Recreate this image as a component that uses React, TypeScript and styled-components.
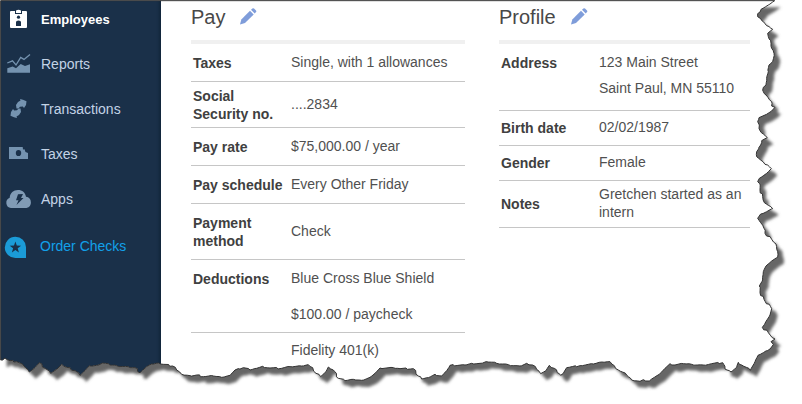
import React from "react";
import styled, { createGlobalStyle } from "styled-components";

const GlobalStyle = createGlobalStyle`
  *, *::before, *::after { box-sizing: border-box; }
  body {
    margin: 0;
    background: #fff;
    font-family: "Liberation Sans", Arial, Helvetica, sans-serif;
    font-size: 14px;
    color: #444;
  }
`;

const Page = styled.div`
  position: relative;
  display: flex;
  min-height: 100vh;
  overflow: hidden;
`;

const Sidebar = styled.nav`
  flex: 0 0 161px;
  display: flex;
  flex-direction: column;
  gap: 9px;
  padding: 1px 0 0 1px;
  background: #1a3049;
  box-shadow: inset -4px 0 3px -2px #12263b;
`;

const NavLink = styled.a<{ $tone?: "active" | "accent" }>`
  display: flex;
  align-items: center;
  gap: ${(p) => (p.$tone === "accent" ? "0" : "1px")};
  height: 36px;
  margin-top: ${(p) => (p.$tone === "accent" ? "2px" : "0")};
  font-size: ${(p) => (p.$tone === "active" ? "13px" : "14px")};
  font-weight: ${(p) => (p.$tone === "active" ? 700 : 400)};
  color: ${(p) =>
    p.$tone === "active" ? "#fff" : p.$tone === "accent" ? "#12a0ea" : "#c3d3e6"};
  text-decoration: none;
`;

const NavIcon = styled.svg`
  flex: none;
  width: 39px;
  height: 28px;
`;

const Content = styled.main`
  flex: 1;
  display: grid;
  grid-template-columns: 274fr 251fr;
  align-items: start;
  column-gap: 34px;
  padding: 0 52px 0 30px;
`;

const Panel = styled.section`
  min-width: 0;
`;

const PanelHeader = styled.header`
  display: flex;
  align-items: flex-start;
  gap: 15px;
  height: 44px;
  padding-top: 5px;
  border-bottom: 4px solid #f0f0f0;
`;

const PanelTitle = styled.h2`
  margin: 0;
  font-size: 20px;
  line-height: 24px;
  font-weight: 400;
  color: #484848;
`;

const EditButton = styled.button`
  display: flex;
  padding: 3px 0 0;
  border: 0;
  background: none;
  cursor: pointer;
`;

const Details = styled.table`
  width: 100%;
  table-layout: fixed;
  border-spacing: 0;
`;

const LabelColumn = styled.col`
  width: 100px;
`;

const Row = styled.tr<{ $height: number }>`
  height: ${(p) => p.$height}px;
`;

const Label = styled.th<{ $lead?: number; $last?: boolean }>`
  padding: ${(p) => (p.$lead === 26 ? "6px" : p.$lead ? "1px" : "0")} 0 0 2px;
  border-bottom: ${(p) => (p.$last ? "0" : "1px solid #c6c6c6")};
  text-align: left;
  vertical-align: ${(p) => (p.$lead ? "top" : "middle")};
  line-height: ${(p) => p.$lead ?? 18}px;
  font-weight: 700;
  color: #404040;
`;

const Value = styled.td<{ $lead?: number; $last?: boolean }>`
  padding: ${(p) => (p.$lead === 26 ? "5px 0 0" : p.$lead ? "0" : "0 0 2px")};
  border-bottom: ${(p) => (p.$last ? "0" : "1px solid #c6c6c6")};
  vertical-align: ${(p) => (p.$lead ? "top" : "middle")};
  line-height: ${(p) => p.$lead ?? 18}px;
  color: #505050;
`;

const Line = styled.div``;

const TornEdge = styled.svg`
  position: absolute;
  inset: 0;
  width: 100%;
  height: 100%;
  pointer-events: none;
`;

const DARK = "#1a3049";
const MUTED = "#7593b0";
const ARROW =
  "M15.500 13.500 15 10l2-3 2.500-1.500L19 4l3 .8 3.500 1.500-.5 3.700-2 3-1.200-1.500-2.800.3-1.500 1.700z";

const navItems: {
  name: string;
  tone?: "active" | "accent";
  icon: React.ReactNode;
}[] = [
  {
    name: "Employees",
    tone: "active",
    icon: (
      <>
        <rect x="9" y="6" width="17" height="17" rx="1" fill="#fff" />
        <path d="M15 6V5.500q2.500-1.500 5 0V6z" fill="#fff" />
        <path d="M14 6h1v2h5V6h1v3h-7z" fill={DARK} />
        <circle cx="17.500" cy="12.200" r="1.600" fill={DARK} />
        <path d="M15 21v-4q0-1.500 2.500-1.500t2.500 1.500v4z" fill={DARK} />
      </>
    ),
  },
  {
    name: "Reports",
    icon: (
      <>
        <path
          d="M6.300 13 11.500 10.800 15 15l4.700-7.600 3.300 2 6-5"
          fill="none"
          stroke={MUTED}
          strokeWidth="1.300"
        />
        <path d="M6.300 18.300 11.700 16.500 15 18.300l4.700-4.300 4.300 2 5-1.700v8.400H6.300z" fill={MUTED} />
      </>
    ),
  },
  {
    name: "Transactions",
    icon: (
      <g fill={MUTED}>
        <path d={ARROW} />
        <path d={ARROW} transform="rotate(180 17.500 13.500)" />
      </g>
    ),
  },
  {
    name: "Taxes",
    icon: (
      <>
        <path d="M8 7h13.700l.3 2.500 1.500-.2 1 2.700 2.500 1v6H8z" fill={MUTED} />
        <ellipse cx="17.500" cy="13" rx="2.700" ry="3.100" fill={DARK} />
      </>
    ),
  },
  {
    name: "Apps",
    icon: (
      <>
        <path
          d="M10 23a5.300 5.300 0 0 1-1.300-10.200C9 8 12.500 5 17 5c4.300 0 7.300 2.500 8 6.800A5.700 5.700 0 0 1 25.500 23z"
          fill="#819bb5"
        />
        <path d="M17 9.300 22 9l-2 4h2.500L15.500 20l2-4.700H15z" fill={DARK} />
      </>
    ),
  },
  {
    name: "Order Checks",
    tone: "accent",
    icon: (
      <>
        <path d="M25 15.300V26H14.500A10.600 10.600 0 1 1 25 15.300z" fill="#1b9bd7" />
        <path
          d="m14.400 9.500 1.400 4.100 4.300.1-3.400 2.600 1.200 4.200-3.500-2.500-3.500 2.500 1.200-4.200-3.400-2.600 4.300-.1z"
          fill={DARK}
        />
      </>
    ),
  },
];

type Detail = {
  label?: string;
  lines: string[];
  height: number;
  lead?: number;
  last?: boolean;
};

const pay: Detail[] = [
  { label: "Taxes", lines: ["Single, with 1 allowances"], height: 38 },
  { label: "Social Security no.", lines: ["....2834"], height: 46 },
  { label: "Pay rate", lines: ["$75,000.00 / year"], height: 38 },
  { label: "Pay schedule", lines: ["Every Other Friday"], height: 38 },
  { label: "Payment method", lines: ["Check"], height: 56 },
  {
    label: "Deductions",
    lines: ["Blue Cross Blue Shield", "$100.00 / paycheck"],
    height: 72,
    lead: 36,
  },
  { lines: ["Fidelity 401(k)"], height: 36, lead: 34, last: true },
];

const profile: Detail[] = [
  {
    label: "Address",
    lines: ["123 Main Street", "Saint Paul, MN 55110"],
    height: 67,
    lead: 26,
  },
  { label: "Birth date", lines: ["02/02/1987"], height: 35 },
  { label: "Gender", lines: ["Female"], height: 35 },
  { label: "Notes", lines: ["Gretchen started as an intern"], height: 47 },
];

/* Outline of the torn sheet, in thirds of a pixel: each run has its own origin. */
const tearRuns: { x: number; y: number; points: string }[] = [
  {
    x: 2160,
    y: 0,
    points:
      "164,2 158,6 145,15 124,27 120,36 113,41 113,50 122,56 130,65 140,77 158,88 143,100 145,110 152,122 155,145 162,160 158,185 147,195 145,215 140,235 138,255 130,262 130,275 138,285 155,305 155,318 165,322 155,333 135,345 117,353 113,365 118,375 120,392 130,402 142,413 125,422 122,435 110,455 110,470 122,480 135,493 154,506 140,520 118,535 113,545",
  },
  {
    x: 2160,
    y: 540,
    points:
      "118,10 120,30 128,50 133,68 145,76 158,86 140,95 122,102 113,115 122,128 132,145 135,160 155,178 168,192 173,215 173,232 155,243 138,258 130,275 128,300 118,318 120,338 132,358 155,386 150,405 135,430 127,442 145,458 165,477 153,485 160,493 150,507 130,518 114,526 105,545 91,571",
  },
  {
    x: 1560,
    y: 960,
    points:
      "665,135 655,127 650,142 633,156 615,147 608,128 575,131 550,135 515,133 490,131 465,135 450,131 435,145 418,163 395,177 388,183 370,179 360,184 335,180 320,165 295,150 283,137 270,125 245,126 220,132 180,137 140,143 130,160 122,166 112,158 103,145 88,136 78,152 62,161 50,148 38,135 20,130 0,138",
  },
  {
    x: 750,
    y: 1020,
    points:
      "775,74 740,70 708,65 690,70 665,70 645,75 600,76 590,92 575,108 555,103 535,113 515,117 505,108 490,86 450,86 430,83 390,84 375,100 360,112 335,121 310,118 285,122 265,115 250,90 235,81 228,95 212,110 198,100 188,83 175,74 155,78 120,80 95,85 60,84 38,79 20,85 0,90",
  },
  {
    x: 0,
    y: 1020,
    points:
      "730,83 705,90 690,106 665,112 640,108 610,110 590,105 570,107 545,103 530,90 518,78 490,73 475,69 455,72 440,80 420,98 405,83 385,80 350,77 330,75 308,69 290,76 268,77 255,92 240,106 225,92 200,82 185,73 170,88 152,100 135,85 118,68 105,83 88,96 72,78 50,65 30,62 15,54 8,60 2,60",
  },
];

function buildTear() {
  const pts = tearRuns.flatMap((run) =>
    run.points.split(" ").map((pair) => {
      const [x, y] = pair.split(",").map(Number);
      return [run.x + x, run.y + y];
    })
  );
  // Small alternating jags give each segment a ragged paper edge.
  const out: string[] = ["2,2", pts[0].join(",")];
  for (let i = 1; i < pts.length; i++) {
    const [ax, ay] = pts[i - 1];
    const [bx, by] = pts[i];
    const steps = Math.max(1, Math.round(Math.hypot(bx - ax, by - ay) / 8));
    for (let s = 1; s < steps; s++) {
      const jag = [2, -1, 1, -2, 0][(i * 3 + s * 2) % 5];
      out.push(`${ax + ((bx - ax) * s) / steps + jag},${ay + ((by - ay) * s) / steps - jag}`);
    }
    out.push(`${bx},${by}`);
  }
  return `M${out.join("L")}Z`;
}

const tear = buildTear();

function PaperEdge() {
  return (
    <TornEdge viewBox="0 0 2406 1212" preserveAspectRatio="none" aria-hidden="true">
      <defs>
        <clipPath id="outside">
          <path d={`M0 0H2406V1212H0Z${tear}`} clipRule="evenodd" />
        </clipPath>
        <filter id="soften" x="-5%" y="-5%" width="110%" height="110%">
          <feGaussianBlur stdDeviation="5" />
        </filter>
      </defs>
      <g clipPath="url(#outside)">
        <path d="M0 0H2406V1212H0Z" fill="#fff" />
        <g filter="url(#soften)">
          <path d={tear} fill="#666" transform="translate(18 20)" />
        </g>
      </g>
      <path d={tear} fill="none" stroke="#333" strokeWidth="3" />
    </TornEdge>
  );
}

function InfoPanel({ title, rows }: { title: string; rows: Detail[] }) {
  return (
    <Panel>
      <PanelHeader>
        <PanelTitle>{title}</PanelTitle>
        <EditButton type="button" aria-label={`Edit ${title}`}>
          <svg width="17" height="17" viewBox="0 0 17 17" fill="#7f9dda">
            <path d="M0 16.500 1.300 11.500 10 2.800l3.700 3.700L5 15z" />
            <path d="M11 1.800 12.400.5q.8-.7 1.600 0L16 2.400q.7.800 0 1.600L14.700 5.500z" />
          </svg>
        </EditButton>
      </PanelHeader>
      <Details>
        <colgroup>
          <LabelColumn />
          <col />
        </colgroup>
        <tbody>
          {rows.map((row) => (
            <Row key={row.lines[0]} $height={row.height}>
              <Label scope="row" $lead={row.lead} $last={row.last}>
                {row.label}
              </Label>
              <Value $lead={row.lead} $last={row.last}>
                {row.lines.map((line) => (
                  <Line key={line}>{line}</Line>
                ))}
              </Value>
            </Row>
          ))}
        </tbody>
      </Details>
    </Panel>
  );
}

export default function App() {
  return (
    <>
      <GlobalStyle />
      <Page>
        <Sidebar>
          {navItems.map((item) => (
            <NavLink key={item.name} href="#" $tone={item.tone}>
              <NavIcon viewBox="0 0 39 28" aria-hidden="true">
                {item.icon}
              </NavIcon>
              {item.name}
            </NavLink>
          ))}
        </Sidebar>
        <Content>
          <InfoPanel title="Pay" rows={pay} />
          <InfoPanel title="Profile" rows={profile} />
        </Content>
        <PaperEdge />
      </Page>
    </>
  );
}
